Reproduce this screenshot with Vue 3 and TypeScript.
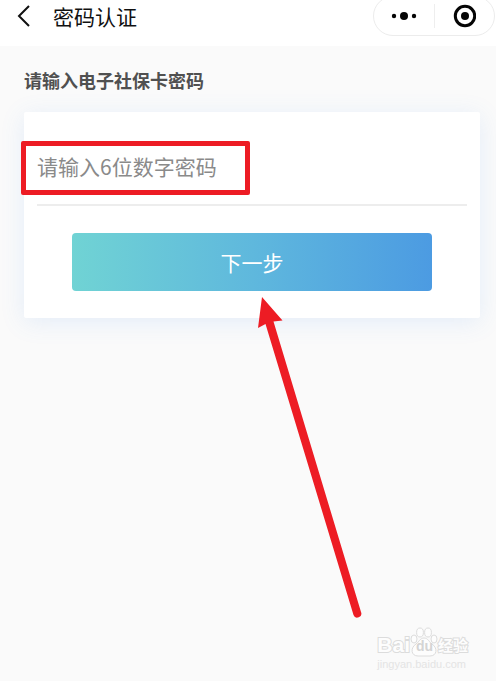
<script setup lang="ts">
import { ref } from 'vue'

const password = ref('')
</script>

<template>
  <div class="page">
    <header class="bar">
      <button class="back" type="button" aria-label="返回">
        <svg width="14" height="24" viewBox="0 0 14 24" fill="none" stroke="#111" stroke-width="2">
          <path d="M12 2 L2 12 L12 22" />
        </svg>
      </button>
      <h1 class="title">密码认证</h1>
      <div class="capsule">
        <button class="capsule-btn" type="button" aria-label="更多">
          <svg width="26" height="10" viewBox="0 0 26 10" fill="#050505">
            <circle cx="3" cy="5" r="2.2" />
            <circle cx="13" cy="5" r="4" />
            <circle cx="23" cy="5" r="2.2" />
          </svg>
        </button>
        <span class="divider"></span>
        <button class="capsule-btn" type="button" aria-label="关闭">
          <svg width="24" height="24" viewBox="0 0 24 24">
            <circle cx="13" cy="12" r="9.7" fill="none" stroke="#050505" stroke-width="3" />
            <circle cx="13" cy="12" r="4" fill="#050505" />
          </svg>
        </button>
      </div>
    </header>

    <main class="content">
      <label class="label" for="password">请输入电子社保卡密码</label>
      <form class="card" @submit.prevent>
        <div class="field">
          <input
            id="password"
            v-model="password"
            class="input"
            type="password"
            inputmode="numeric"
            maxlength="6"
            placeholder="请输入6位数字密码"
          />
          <span class="highlight"></span>
        </div>
        <button class="next" type="submit">下一步</button>
        <svg class="arrow" width="106" height="322" viewBox="0 0 106 322" fill="#ed1c24">
          <path d="M4 0 L24.500 23.500 L15.500 24.500 L103 315 A4 4 0 0 1 95.500 318 L7.500 27 L0 31 Z" />
        </svg>
      </form>
    </main>

    <div class="watermark">
      <div class="brand">
        <span class="brand-latin">Bai</span>
        <span class="paw-wrap">
          <svg class="paw" width="28" height="30" viewBox="0 0 28 30" fill="#fdfdfd" stroke="#dcdcdc">
            <ellipse cx="4" cy="12" rx="3" ry="4" />
            <ellipse cx="10" cy="5.500" rx="3.400" ry="4.500" />
            <ellipse cx="18" cy="5.500" rx="3.400" ry="4.500" />
            <ellipse cx="24" cy="12" rx="3" ry="4" />
            <path d="M14 11 C18 11 19 15 22 17 C28 21 27 29 20 29 L8 29 C1 29 0 21 6 17 C9 15 10 11 14 11 Z" />
          </svg>
          <span class="du">du</span>
        </span>
        <span class="brand-cn">经验</span>
      </div>
      <div class="domain">jingyan.baidu.com</div>
    </div>
  </div>
</template>

<style>
body {
  margin: 0;
  background: #fafafa;
}
</style>

<style scoped>
.page {
  position: relative;
  box-sizing: border-box;
  min-height: 100vh;
  overflow: hidden;
  background: #fafafa;
  font-family: "Noto Sans CJK SC", sans-serif;
}

button {
  padding: 0;
  border: 0;
  background: none;
  font-family: inherit;
  cursor: pointer;
}

.bar {
  display: flex;
  align-items: center;
  height: 32px;
  padding: 0 1px 14px 17px;
  background: #fff;
}

.back {
  display: flex;
  width: 36px;
}

.title {
  flex: 1;
  margin: 0;
  color: #111;
  font-size: 21px;
  font-weight: 400;
  line-height: 30px;
}

.capsule {
  display: flex;
  align-items: center;
  box-sizing: border-box;
  width: 122px;
  height: 40px;
  border: 1px solid #ececec;
  border-radius: 20px;
}

.capsule-btn {
  display: flex;
  flex: 1;
  align-items: center;
  justify-content: center;
  height: 100%;
}

.divider {
  width: 1px;
  height: 24px;
  background: #eee;
}

.content {
  padding: 20px 16px 0 24px;
}

.label {
  display: block;
  margin-bottom: 18px;
  color: #505050;
  font-size: 18px;
  font-weight: 700;
  line-height: 28px;
}

.card {
  position: relative;
  padding: 29px 13px 27px;
  border-radius: 2px;
  background: #fff;
  box-shadow: 0 4px 24px rgba(80, 145, 240, 0.13);
}

.field {
  position: relative;
  padding-bottom: 14px;
  border-bottom: 2px solid #ededed;
}

.input {
  display: block;
  box-sizing: border-box;
  width: 100%;
  height: 49px;
  padding: 0;
  border: 0;
  outline: 0;
  background: transparent;
  color: #333;
  font-family: inherit;
  font-size: 21px;
}

.input::placeholder {
  color: #8a8a8a;
  opacity: 1;
}

.highlight {
  position: absolute;
  top: 0;
  left: -16px;
  box-sizing: border-box;
  width: 229px;
  height: 54px;
  border: 5px solid #ed1c24;
  border-radius: 2px;
  pointer-events: none;
}

.next {
  display: block;
  width: calc(100% - 70px);
  height: 58px;
  margin: 27px auto 0;
  border-radius: 4px;
  background: linear-gradient(90deg, #70d3d4, #5fb8dd 50%, #4c9be2);
  color: #fff;
  font-size: 21px;
}

.arrow {
  position: absolute;
  top: 185px;
  left: 234px;
  pointer-events: none;
}

.watermark {
  position: absolute;
  right: 28px;
  bottom: 10px;
  color: #fdfdfd;
  font-family: "Liberation Sans", "Noto Sans CJK SC", sans-serif;
  paint-order: stroke fill;
  -webkit-text-stroke: 2px #dcdcdc;
}

.brand {
  display: flex;
  align-items: flex-end;
  height: 30px;
}

.brand-latin {
  font-size: 21px;
  font-weight: 700;
  line-height: 24px;
}

.paw-wrap {
  position: relative;
  display: flex;
}

.paw {
  paint-order: normal;
}

.du {
  position: absolute;
  bottom: 4px;
  left: 6px;
  color: #d4d4d4;
  font-size: 14px;
  font-weight: 700;
  line-height: 14px;
  -webkit-text-stroke: 0;
}

.brand-cn {
  font-size: 15px;
  font-weight: 700;
  line-height: 22px;
}

.domain {
  color: #e4e4e4;
  font-size: 11px;
  line-height: 14px;
  -webkit-text-stroke: 0;
}
</style>
